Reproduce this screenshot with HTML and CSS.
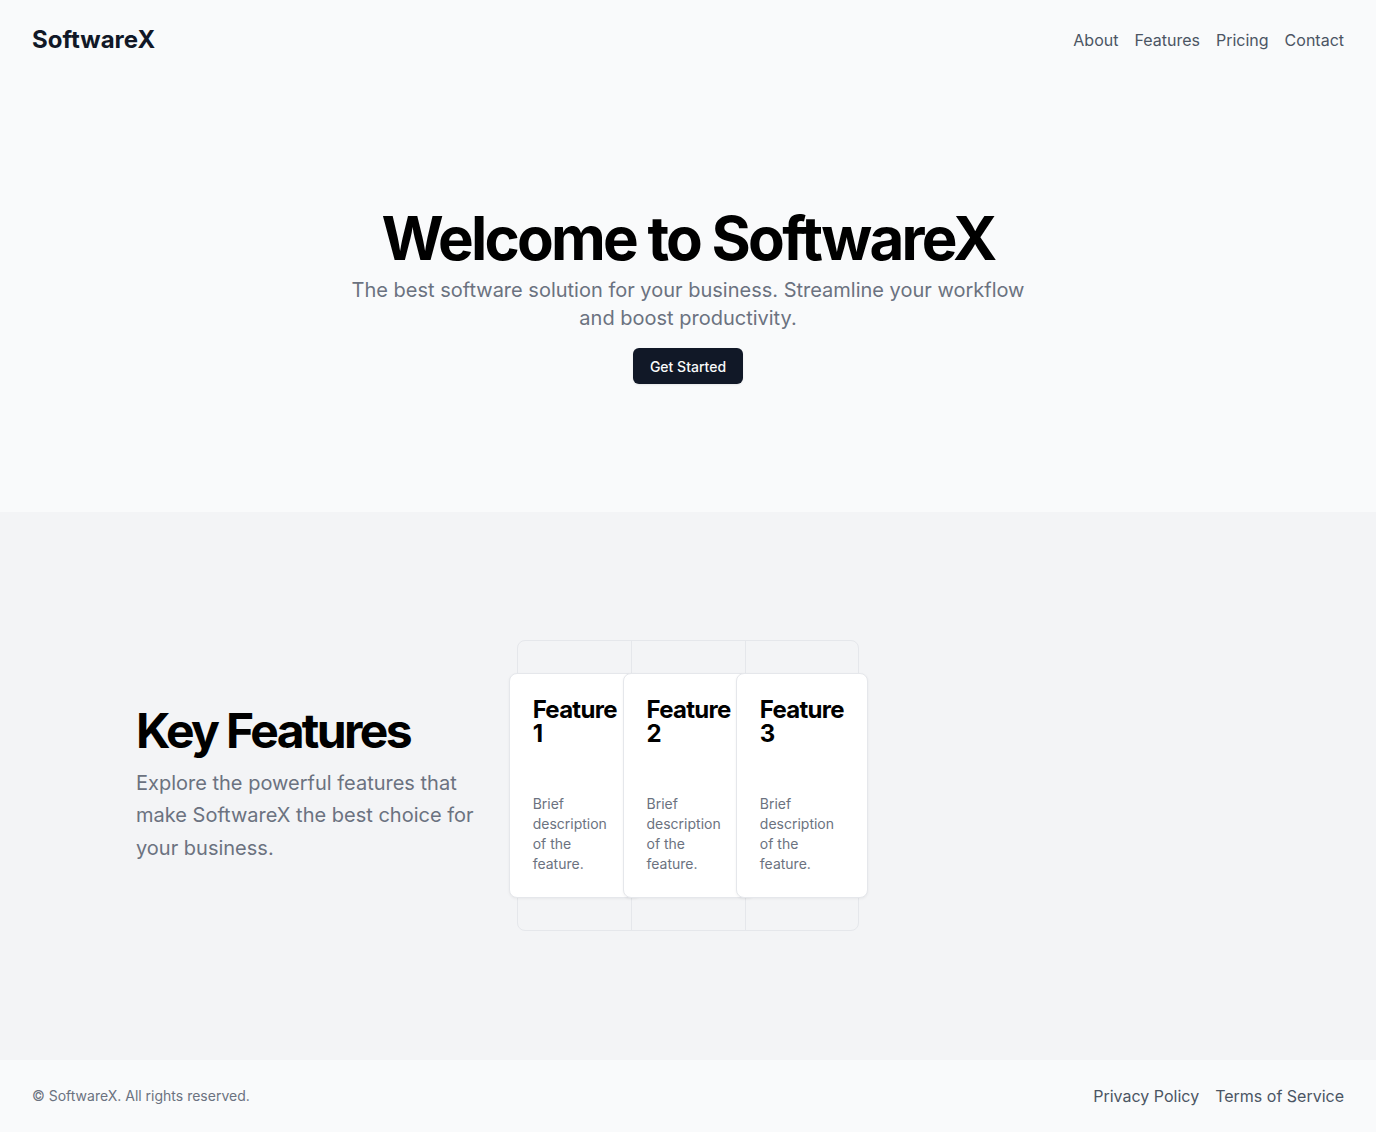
FILE: index.html
```html
<!DOCTYPE html>
<html lang="en">
<head>
<meta charset="utf-8">
<title>SoftwareX</title>
<link rel="stylesheet" href="styles.css">
</head>
<body>
<header class="site-header">
  <a class="logo" href="#">SoftwareX</a>
  <nav class="nav">
    <a href="#">About</a>
    <a href="#">Features</a>
    <a href="#">Pricing</a>
    <a href="#">Contact</a>
  </nav>
</header>
<main>
  <section class="hero">
    <h1 class="hero-title">Welcome to SoftwareX</h1>
    <p class="hero-sub">The best software solution for your business. Streamline your workflow and boost productivity.</p>
    <a class="btn" href="#">Get Started</a>
  </section>
  <section class="features">
    <div class="features-inner">
      <div class="features-text">
        <h2 class="features-title">Key Features</h2>
        <p class="features-sub">Explore the powerful features that make SoftwareX the best choice for your business.</p>
      </div>
      <div class="feature-grid">
        <div class="cell">
          <div class="card">
            <h3 class="card-title">Feature 1</h3>
            <p class="card-desc">Brief description of the feature.</p>
          </div>
        </div>
        <div class="cell">
          <div class="card">
            <h3 class="card-title">Feature 2</h3>
            <p class="card-desc">Brief description of the feature.</p>
          </div>
        </div>
        <div class="cell">
          <div class="card">
            <h3 class="card-title">Feature 3</h3>
            <p class="card-desc">Brief description of the feature.</p>
          </div>
        </div>
      </div>
    </div>
  </section>
</main>
<footer class="site-footer">
  <p class="copy">© SoftwareX. All rights reserved.</p>
  <nav class="footer-nav">
    <a href="#">Privacy Policy</a>
    <a href="#">Terms of Service</a>
  </nav>
</footer>
</body>
</html>
```

FILE: styles.css
```css
* { box-sizing: border-box; margin: 0; padding: 0; }
html, body { background: #f9fafb; }
body {
  font-family: Inter, "Noto Sans", sans-serif;
  color: #111827;
  -webkit-font-smoothing: antialiased;
}
a { text-decoration: none; color: inherit; }

.site-header {
  display: flex;
  justify-content: space-between;
  align-items: center;
  padding: 24px 32px;
  height: 80px;
  background: #f9fafb;
}
.logo {
  font-size: 24px;
  line-height: 32px;
  font-weight: 700;
  color: #111827;
}
.nav { display: flex; gap: 16px; }
.nav a {
  font-size: 16px;
  line-height: 24px;
  color: #4b5563;
}

.hero {
  display: flex;
  flex-direction: column;
  align-items: center;
  text-align: center;
  padding: 128px 16px;
  background: #f9fafb;
}
.hero-title {
  font-size: 60px;
  line-height: 1;
  font-weight: 700;
  letter-spacing: -0.046em;
  color: #000;
}
.hero-sub {
  margin-top: 8px;
  max-width: 700px;
  font-size: 20px;
  line-height: 28px;
  color: #6b7280;
}
.btn {
  margin-top: 16px;
  display: inline-flex;
  align-items: center;
  height: 36px;
  padding: 0 17px;
  border-radius: 6px;
  background: #111827;
  color: #f9fafb;
  font-size: 14px;
  font-weight: 500;
  box-shadow: 0 1px 2px rgba(0,0,0,0.08);
}

.features {
  background: #f3f4f6;
  padding: 128px 0 129px;
}
.features-inner {
  display: flex;
  align-items: center;
  padding-left: 136px;
}
.features-text {
  width: 345px;
  margin-right: 36px;
}
.features-title {
  font-size: 48px;
  line-height: 48px;
  font-weight: 700;
  letter-spacing: -0.055em;
  color: #000;
}
.features-sub {
  margin-top: 12px;
  font-size: 20px;
  line-height: 32.5px;
  color: #6b7280;
}

.feature-grid {
  display: grid;
  grid-template-columns: repeat(3, minmax(0, 1fr));
  width: 342px;
  height: 291px;
  border: 1px solid #e5e7eb;
  border-radius: 8px;
}
.cell {
  display: flex;
  align-items: center;
  justify-content: center;
  min-width: 0;
  border-left: 1px solid #e5e7eb;
}
.cell:first-child { border-left: none; }
.card {
  flex: 0 0 132px;
  width: 132px;
  height: 225px;
  margin: 0 -9px;
  background: #fff;
  border: 1px solid #e5e7eb;
  border-radius: 8px;
  box-shadow: 0 1px 3px rgba(0,0,0,0.05);
  padding: 24px 23px;
  position: relative;
}
.card-title {
  font-size: 24px;
  line-height: 24px;
  font-weight: 700;
  letter-spacing: -0.03em;
  color: #000;
}
.card-desc {
  margin-top: 48px;
  font-size: 14px;
  line-height: 20px;
  color: #6b7280;
}

.site-footer {
  display: flex;
  justify-content: space-between;
  align-items: center;
  padding: 24px 32px;
  background: #f9fafb;
  height: 72px;
}
.copy {
  font-size: 14px;
  line-height: 20px;
  color: #6b7280;
}
.footer-nav { display: flex; gap: 16px; }
.footer-nav a {
  font-size: 16px;
  line-height: 24px;
  color: #4b5563;
}
```
